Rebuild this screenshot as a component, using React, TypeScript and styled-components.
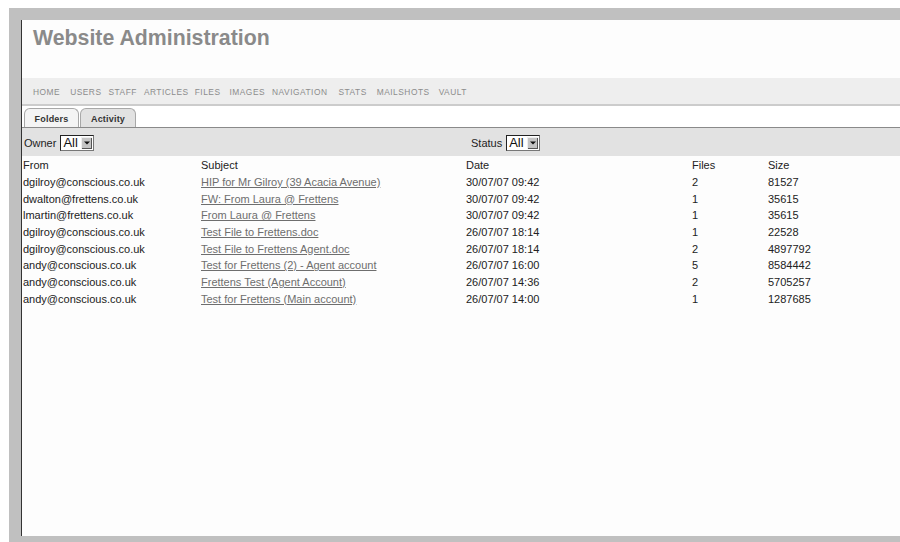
import React from "react";
import styled, { createGlobalStyle } from "styled-components";

const GlobalStyle = createGlobalStyle`
  html, body {
    margin: 0;
    padding: 0;
    background: #ffffff;
    font-family: "Liberation Sans", Arial, sans-serif;
  }
  * { box-sizing: border-box; }
`;

const Frame = styled.div`
  margin: 8px 0 0 9px;
  height: 534px;
  background: #c0c0c0;
  padding: 12px 0 6px 12px;
`;

const Panel = styled.div`
  height: 100%;
  background: #fdfdfd;
  border-left: 1px solid #333333;
  display: flex;
  flex-direction: column;
`;

const Header = styled.header`
  height: 58px;
  padding: 5px 0 0 11px;
  background: #fdfdfd;
`;

const Title = styled.h1`
  margin: 0;
  font-size: 21.3px;
  line-height: 26px;
  font-weight: bold;
  color: #8a8a8a;
`;

const Nav = styled.nav`
  height: 28px;
  background: #eeeeee;
  border-bottom: 2px solid #cccccc;
  display: flex;
  align-items: center;
  padding: 2px 0 0 11px;
`;

const NavLink = styled.a<{ $gap: number }>`
  font-size: 8.4px;
  letter-spacing: 0.5px;
  color: #8c8c8c;
  text-decoration: none;
  margin-right: ${(p) => p.$gap}px;
`;

const TabBar = styled.div`
  height: 22px;
  display: flex;
  align-items: flex-end;
  padding-left: 2px;
  border-bottom: 1px solid #8a8a8a;
  background: #ffffff;
`;

const Tab = styled.div<{ $active?: boolean }>`
  height: 19px;
  width: ${(p) => (p.$active ? 55 : 56)}px;
  margin-right: 1px;
  border: 1px solid #a8a8a8;
  border-bottom: none;
  border-radius: 6px 6px 0 0;
  background: ${(p) => (p.$active ? "#f4f4f4" : "#e2e2e2")};
  font-size: 9px;
  letter-spacing: 0.2px;
  font-weight: bold;
  color: #333333;
  display: flex;
  align-items: center;
  justify-content: center;
  padding-top: 2px;
`;

const FilterBar = styled.div`
  height: 28px;
  background: #e2e2e2;
  display: grid;
  grid-template-columns: 447px 1fr;
  align-items: center;
  padding-left: 2px;
  padding-top: 1px;
`;

const Filter = styled.label`
  display: flex;
  align-items: center;
  font-size: 11px;
  color: #222222;
`;

const SelectBox = styled.span`
  display: inline-flex;
  align-items: stretch;
  height: 16px;
  margin-left: 4px;
  border: 1px solid #222222;
  border-right-color: #777777;
  border-bottom-color: #777777;
  background: #ffffff;
`;

const SelectValue = styled.span`
  font-size: 13px;
  line-height: 14px;
  padding: 0 3px 0 2px;
  color: #111111;
`;

const SelectButton = styled.span`
  width: 11px;
  margin: 1px 1px 1px 0;
  background: #c4c4c4;
  border-left: 1px solid #eeeeee;
  border-top: 1px solid #eeeeee;
  box-shadow: inset -1px -1px 0 #555555;
  display: flex;
  align-items: center;
  justify-content: center;
`;

const Table = styled.table`
  border-collapse: collapse;
  table-layout: fixed;
  width: 845px;
  margin-top: 1px;
  font-size: 11px;
  color: #222222;
`;

const Th = styled.th<{ $w: number }>`
  text-align: left;
  font-weight: normal;
  width: ${(p) => p.$w}px;
  height: 17px;
  padding: 0 0 0 1px;
  line-height: 15px;
`;

const Td = styled.td`
  height: 16.7px;
  padding: 0 0 0 1px;
  line-height: 15px;
  white-space: nowrap;
`;

const SubjectLink = styled.a`
  color: #6e6e6e;
  text-decoration: underline;
`;

const navItems: [string, number][] = [
  ["HOME", 10],
  ["USERS", 7],
  ["STAFF", 7],
  ["ARTICLES", 6],
  ["FILES", 9],
  ["IMAGES", 7],
  ["NAVIGATION", 11],
  ["STATS", 10],
  ["MAILSHOTS", 9],
  ["VAULT", 0],
];

const rows = [
  ["dgilroy@conscious.co.uk", "HIP for Mr Gilroy (39 Acacia Avenue)", "30/07/07 09:42", "2", "81527"],
  ["dwalton@frettens.co.uk", "FW: From Laura @ Frettens", "30/07/07 09:42", "1", "35615"],
  ["lmartin@frettens.co.uk", "From Laura @ Frettens", "30/07/07 09:42", "1", "35615"],
  ["dgilroy@conscious.co.uk", "Test File to Frettens.doc", "26/07/07 18:14", "1", "22528"],
  ["dgilroy@conscious.co.uk", "Test File to Frettens Agent.doc", "26/07/07 18:14", "2", "4897792"],
  ["andy@conscious.co.uk", "Test for Frettens (2) - Agent account", "26/07/07 16:00", "5", "8584442"],
  ["andy@conscious.co.uk", "Frettens Test (Agent Account)", "26/07/07 14:36", "2", "5705257"],
  ["andy@conscious.co.uk", "Test for Frettens (Main account)", "26/07/07 14:00", "1", "1287685"],
];

const Arrow = () => (
  <svg width="6" height="4" viewBox="0 0 6 4">
    <path d="M0 0.5h6L3 3.5z" fill="#111" />
  </svg>
);

const Select = () => (
  <SelectBox>
    <SelectValue>All</SelectValue>
    <SelectButton>
      <Arrow />
    </SelectButton>
  </SelectBox>
);

export default function App() {
  return (
    <>
      <GlobalStyle />
      <Frame>
        <Panel>
          <Header>
            <Title>Website Administration</Title>
          </Header>
          <Nav>
            {navItems.map(([label, gap]) => (
              <NavLink key={label} href="#" $gap={gap}>
                {label}
              </NavLink>
            ))}
          </Nav>
          <TabBar>
            <Tab $active>Folders</Tab>
            <Tab>Activity</Tab>
          </TabBar>
          <FilterBar>
            <Filter>
              Owner
              <Select />
            </Filter>
            <Filter>
              Status
              <Select />
            </Filter>
          </FilterBar>
          <Table>
            <thead>
              <tr>
                <Th $w={178}>From</Th>
                <Th $w={265}>Subject</Th>
                <Th $w={226}>Date</Th>
                <Th $w={76}>Files</Th>
                <Th $w={100}>Size</Th>
              </tr>
            </thead>
            <tbody>
              {rows.map((r, i) => (
                <tr key={i}>
                  <Td>{r[0]}</Td>
                  <Td>
                    <SubjectLink href="#">{r[1]}</SubjectLink>
                  </Td>
                  <Td>{r[2]}</Td>
                  <Td>{r[3]}</Td>
                  <Td>{r[4]}</Td>
                </tr>
              ))}
            </tbody>
          </Table>
        </Panel>
      </Frame>
    </>
  );
}
